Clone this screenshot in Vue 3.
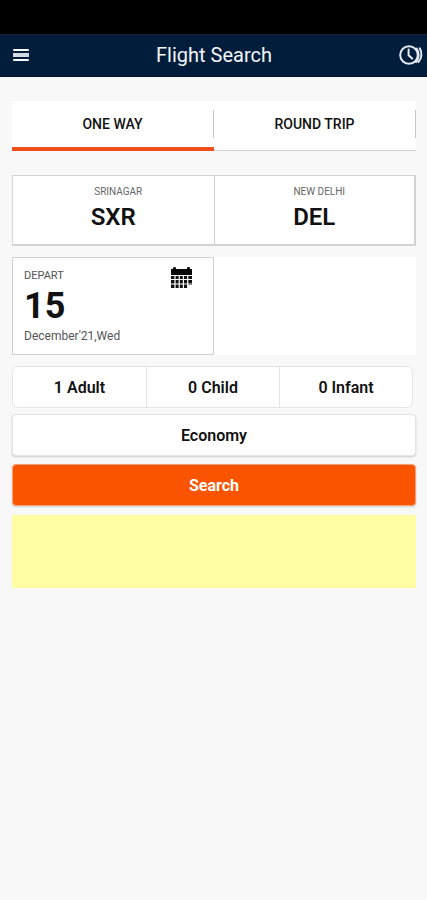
<template>
  <div class="screen">
    <div class="status-bar"></div>
    <header class="app-bar">
      <button class="icon-btn" type="button" aria-label="Menu">
        <svg width="16" height="12" viewBox="0 0 16 12" fill="#fff">
          <rect y="0" width="16" height="2" rx="1"/>
          <rect y="4" width="16" height="4" fill="#d5d8e4"/>
          <rect y="10" width="16" height="2" rx="1"/>
        </svg>
      </button>
      <h1>Flight Search</h1>
      <button class="icon-btn history" type="button" aria-label="Recent searches">
        <svg width="24" height="22" viewBox="0 0 24 22" fill="none" stroke="#e6e9f0" stroke-width="2" stroke-linecap="round">
          <circle cx="10" cy="11" r="8.8"/>
          <path d="M9.6 5.6v5.6l3.6 3.4"/>
          <path d="M17.6 4.6c2.8 3.4 2.8 9.4-.6 13.4"/>
          <path d="M20.8 4.4c2.6 4 2 10-1.4 13.6"/>
        </svg>
      </button>
    </header>

    <main class="content">
      <nav class="tabs">
        <button
          v-for="tab in tabs"
          :key="tab"
          type="button"
          class="tab"
          :class="{ active: tab === activeTab }"
          @click="activeTab = tab"
        ><span>{{ tab }}</span></button>
      </nav>

      <div class="route">
        <button v-for="city in cities" :key="city.code" type="button" class="city">
          <span class="city-name">{{ city.name }}</span>
          <span class="city-code">{{ city.code }}</span>
        </button>
      </div>

      <div class="dates">
        <button type="button" class="date">
          <span class="date-info">
            <span class="date-label">DEPART</span>
            <span class="date-day">15</span>
            <span class="date-month">December'21,Wed</span>
          </span>
          <svg width="22" height="22" viewBox="0 0 22 22">
            <path d="M0 2h2V1q0-1 1.500-1T5 1v1h11V1q0-1 1.500-1T19 1v1h2v6H0z" fill="#080808"/>
            <path d="M0 9h21v9h-4v3H0z" fill="#111"/>
            <path d="M4 8.500v13M8.200 8.500v13M12.400 8.500v13M16.700 8.500v13M0 12.500h21M0 17h21" stroke="#fff" stroke-width="1.200"/>
          </svg>
        </button>
      </div>

      <div class="travellers">
        <button v-for="t in travellers" :key="t.type" type="button">{{ t.count }} {{ t.type }}</button>
      </div>

      <button class="wide-btn" type="button">Economy</button>
      <button class="wide-btn search" type="button">Search</button>
      <div class="banner"></div>
    </main>
  </div>
</template>

<script setup>
import { ref } from 'vue'

const tabs = ['ONE WAY', 'ROUND TRIP']
const activeTab = ref('ONE WAY')

const cities = [
  { name: 'SRINAGAR', code: 'SXR' },
  { name: 'NEW DELHI', code: 'DEL' },
]

const travellers = [
  { count: 1, type: 'Adult' },
  { count: 0, type: 'Child' },
  { count: 0, type: 'Infant' },
]
</script>

<style>
body {
  background: #f8f8f8;
}
</style>

<style scoped>
.screen {
  min-height: 100vh;
  background: #f8f8f8;
  color: #111;
  font-family: Roboto, "Liberation Sans", sans-serif;
}
.screen * {
  box-sizing: border-box;
}
button {
  margin: 0;
  padding: 0;
  border: 0;
  background: none;
  color: inherit;
  font-family: inherit;
  cursor: pointer;
}
svg {
  display: block;
  flex-shrink: 0;
}

.status-bar {
  height: 34px;
  background: #000;
}
.app-bar {
  display: flex;
  align-items: center;
  justify-content: space-between;
  height: 43px;
  padding: 0 4px 2px 13px;
  border-top: 1px solid #1c2230;
  border-bottom: 1px solid #10102c;
  background: #001e3c;
  color: #f4f6f8;
}
.app-bar h1 {
  margin: 0;
  font-size: 20px;
  font-weight: 400;
  line-height: 24px;
}
.icon-btn {
  display: flex;
}

.content {
  display: flex;
  flex-direction: column;
  padding: 24px 11px 24px 12px;
}

.tabs {
  display: grid;
  grid-template-columns: 1fr 1fr;
  height: 50px;
  background: #fff;
}
.tab {
  display: flex;
  align-items: flex-start;
  padding-top: 9px;
  border-bottom: 1px solid #d4d4d4;
  font-size: 14px;
  font-weight: 500;
}
.tab span {
  flex: 1;
  border-right: 1px solid #c4c4c4;
  line-height: 28px;
}
.tab.active {
  border-bottom: 4px solid #f04e1c;
}

.route {
  display: grid;
  grid-template-columns: 1fr 1fr;
  margin-top: 24px;
  border: 1px solid #d4d4d4;
  border-width: 1px 2px 2px 1px;
  background: #fff;
}
.city {
  display: flex;
  flex-direction: column;
  align-items: center;
  height: 68px;
  padding-top: 10px;
}
.city + .city {
  border-left: 1px solid #d0d0d0;
}
.city-name {
  padding-left: 10px;
  color: #666;
  font-size: 10px;
  line-height: 12px;
}
.city-code {
  margin-top: 5px;
  font-size: 24px;
  font-weight: 600;
  line-height: 28px;
}

.dates {
  display: grid;
  grid-template-columns: 1fr 1fr;
  margin-top: 11px;
  background: #fff;
}
.date {
  display: flex;
  align-items: flex-start;
  justify-content: space-between;
  height: 98px;
  padding: 9px 20px 0 11px;
  border: 1px solid #d0d0d0;
  text-align: left;
}
.date-info {
  display: flex;
  flex-direction: column;
}
.date-label,
.date-month {
  color: #555;
  font-size: 12px;
  line-height: 18px;
}
.date-label {
  font-size: 11px;
}
.date-day {
  font-size: 36px;
  font-weight: 700;
  line-height: 42px;
}

.travellers {
  display: grid;
  grid-template-columns: repeat(3, 1fr);
  height: 42px;
  margin: 11px 3px 0 0;
  border: 1px solid #e4e4e4;
  border-radius: 6px;
  background: #fff;
}
.travellers button {
  font-size: 16px;
  font-weight: 600;
}
.travellers button + button {
  border-left: 1px solid #e4e4e4;
}

.wide-btn {
  height: 42px;
  margin-top: 6px;
  border: 1px solid #e4e4e4;
  border-radius: 4px;
  background: #fff;
  box-shadow: 0 1px 2px rgba(0, 0, 0, 0.18);
  font-size: 16px;
  font-weight: 600;
}
.wide-btn.search {
  margin-top: 8px;
  border-color: #f9a278;
  background: #fa5400;
  color: #fff;
  font-weight: 700;
}
.banner {
  height: 73px;
  margin-top: 9px;
  background: #fdfda4;
}
</style>
